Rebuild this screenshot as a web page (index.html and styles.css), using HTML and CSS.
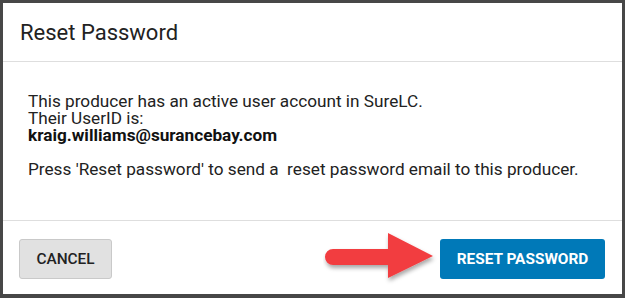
FILE: index.html
```html
<!DOCTYPE html>
<html>
<head>
<meta charset="utf-8">
<link rel="stylesheet" href="styles.css">
</head>
<body>
<div class="frame">
  <div class="dialog">
    <div class="header">Reset Password</div>
    <div class="content">
      <p>This producer has an active user account in SureLC.<br>Their UserID is:<br><b>kraig.williams@surancebay.com</b><br><br>Press 'Reset password' to send a &nbsp;reset password email to this producer.</p>
    </div>
    <div class="footer">
      <button class="btn cancel">CANCEL</button>
      <button class="btn primary">RESET PASSWORD</button>
      <svg class="arrow" width="120" height="58" viewBox="0 0 120 58">
        <defs>
          <filter id="sh" x="-20%" y="-20%" width="140%" height="160%">
            <feDropShadow dx="1" dy="3" stdDeviation="2" flood-color="#000" flood-opacity="0.35"/>
          </filter>
        </defs>
        <g filter="url(#sh)">
          <path d="M10 20 H65 V4 L110 27 L65 49 V36 H10 A8 8 0 0 1 10 20 Z" fill="#f23d41"/>
        </g>
      </svg>
    </div>
  </div>
</div>
</body>
</html>
```
FILE: styles.css
```css
html, body {
  margin: 0;
  padding: 0;
}
body {
  width: 625px;
  height: 298px;
  background: #474747;
  font-family: Roboto, "Liberation Sans", sans-serif;
}
.frame {
  box-sizing: border-box;
  width: 625px;
  height: 298px;
  padding: 3px 3px 4px 3px;
}
.dialog {
  background: #fff;
  height: 291px;
  display: flex;
  flex-direction: column;
}
.header {
  height: 59px;
  box-sizing: border-box;
  padding: 16px 0 0 17px;
  font-size: 22px;
  line-height: 28px;
  color: #222;
  border-bottom: 1px solid #dedede;
}
.content {
  height: 159px;
  box-sizing: border-box;
  padding: 31px 0 0 25px;
  border-bottom: 1px solid #dedede;
}
.content p {
  margin: 0;
  font-size: 17.2px;
  line-height: 17px;
  color: #222;
}
.content b {
  font-weight: 700;
  color: #111;
}
.footer {
  position: relative;
  flex: 1;
  display: flex;
  justify-content: space-between;
  align-items: flex-start;
  padding: 18px 17px 0 16px;
}
.btn {
  height: 40px;
  border-radius: 3px;
  font-family: Roboto, "Liberation Sans", sans-serif;
  font-size: 15.4px;
  cursor: pointer;
  padding: 0;
}
.cancel {
  width: 93px;
  background: #e1e1e1;
  border: 1px solid #c9c9c9;
  color: #222;
  font-weight: 500;
}
.primary {
  width: 165px;
  background: #0079b8;
  border: none;
  color: #fff;
  font-weight: 700;
}
.arrow {
  position: absolute;
  left: 320px;
  top: 8px;
}
```
